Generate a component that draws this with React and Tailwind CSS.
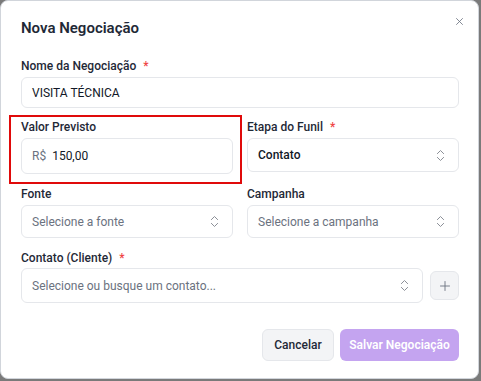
import React from "react";

const Chevrons = () => (
  <svg width="15" height="15" viewBox="0 0 24 24" fill="none" stroke="#8b8f97" strokeWidth="1.6" strokeLinecap="round" strokeLinejoin="round">
    <path d="m7 15 5 5 5-5" />
    <path d="m7 9 5-5 5 5" />
  </svg>
);

const Label = ({ children, req }) => (
  <div className="text-[12px] font-medium text-[#1f2937] leading-[16px] h-[16px] flex items-center">
    {children}
    {req && <span className="text-[#ef4444] ml-[7px]">*</span>}
  </div>
);

const Select = ({ text, strong, className = "" }) => (
  <div className={`rounded-md border border-[#e5e7eb] bg-white flex items-center justify-between pl-[10px] pr-[10px] ${className}`}>
    <span className={strong ? "text-[12px] font-medium text-[#111827]" : "text-[12px] text-[#6b7280]"}>{text}</span>
    <Chevrons />
  </div>
);

export default function App() {
  return (
    <div className="w-[481px] h-[381px] bg-[#7a7a7a] overflow-hidden" style={{ fontFamily: "Roboto, 'Noto Sans', sans-serif" }}>
      <div className="relative w-[479px] h-[379px] bg-white rounded-lg border border-[#d1d5db] pl-[20px] pr-[19px] pt-[17px]">
        <button className="absolute right-[14px] top-[16px] text-[#6b7280]">
          <svg width="9" height="9" viewBox="0 0 24 24" fill="none" stroke="currentColor" strokeWidth="2.2" strokeLinecap="round">
            <path d="M4 4l16 16M20 4L4 20" />
          </svg>
        </button>
        <h2 className="text-[15px] font-semibold text-[#1f2937] leading-[20px]">Nova Negociação</h2>

        <div className="mt-[20px]">
          <Label req>Nome da Negociação</Label>
          <div className="mt-[3px] h-[31px] rounded-md border border-[#e5e7eb] flex items-center px-[10px] text-[12px] text-[#111827]">
            VISITA TÉCNICA
          </div>
        </div>

        <div className="mt-[11px] grid grid-cols-2 gap-[14px] items-start">
          <div className="relative">
            <div className="absolute -left-[12px] -top-[4px] w-[233px] h-[69px] border-[2.5px] border-[#e00a0a] pointer-events-none" />
            <Label>Valor Previsto</Label>
            <div className="mt-[3px] h-[36px] rounded-md border border-[#e5e7eb] flex items-center px-[10px] text-[12px]">
              <span className="text-[#6b7280]">R$</span>
              <span className="ml-[6px] text-[#111827]">150,00</span>
            </div>
          </div>
          <div>
            <Label req>Etapa do Funil</Label>
            <Select text="Contato" strong className="mt-[3px] h-[34px]" />
          </div>
        </div>

        <div className="mt-[12px] grid grid-cols-2 gap-[14px]">
          <div>
            <Label>Fonte</Label>
            <Select text="Selecione a fonte" className="mt-[3px] h-[33px]" />
          </div>
          <div>
            <Label>Campanha</Label>
            <Select text="Selecione a campanha" className="mt-[3px] h-[33px]" />
          </div>
        </div>

        <div className="mt-[12px]">
          <Label req>Contato (Cliente)</Label>
          <div className="mt-[2px] flex items-center gap-[7px]">
            <Select text="Selecione ou busque um contato..." className="flex-1 h-[35px]" />
            <div className="w-[29px] h-[29px] rounded-md border border-[#e5e7eb] bg-[#f3f4f6] flex items-center justify-center text-[#6b7280]">
              <svg width="12" height="12" viewBox="0 0 24 24" fill="none" stroke="currentColor" strokeWidth="1.8" strokeLinecap="round">
                <path d="M12 3v18M3 12h18" />
              </svg>
            </div>
          </div>
        </div>

        <div className="mt-[26px] flex justify-end gap-[6px]">
          <button className="h-[32px] w-[72px] rounded-md border border-[#e5e7eb] bg-[#f3f4f6] text-[12px] font-medium text-[#1f2937]">
            Cancelar
          </button>
          <button className="h-[32px] w-[119px] rounded-md bg-[#c4a4f0] text-[12px] font-semibold text-white">
            Salvar Negociação
          </button>
        </div>
      </div>
    </div>
  );
}
